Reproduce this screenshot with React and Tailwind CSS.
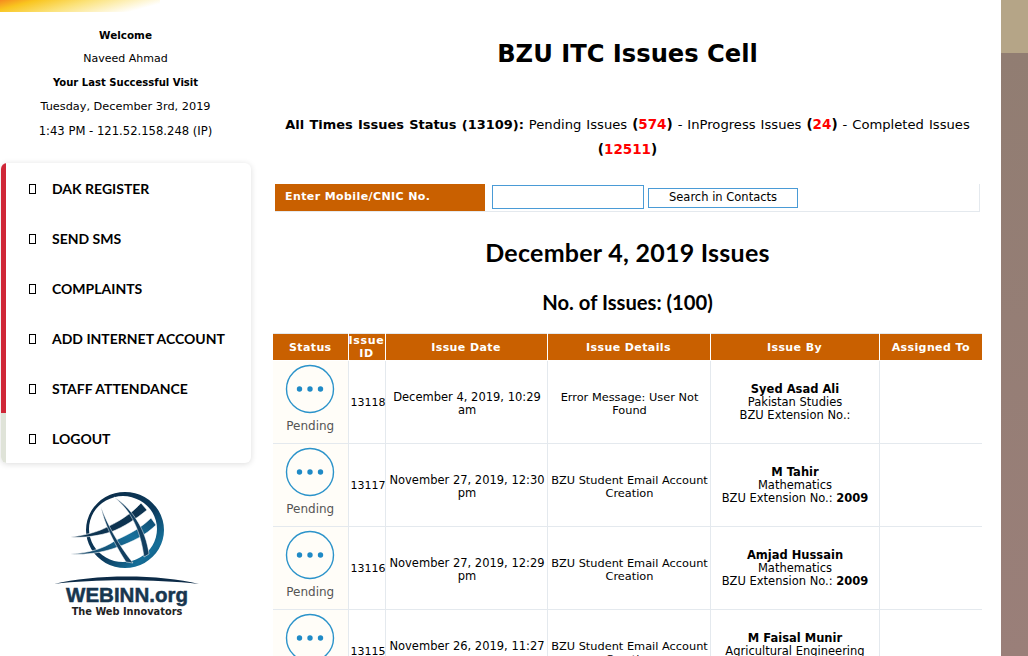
const rows = [
  { id: "13118", date: "December 4, 2019, 10:29 am", details: "Error Message: User Not Found", name: "Syed Asad Ali", dept: "Pakistan Studies", ext: "" },
  { id: "13117", date: "November 27, 2019, 12:30 pm", details: "BZU Student Email Account Creation", name: "M Tahir", dept: "Mathematics", ext: "2009" },
  { id: "13116", date: "November 27, 2019, 12:29 pm", details: "BZU Student Email Account Creation", name: "Amjad Hussain", dept: "Mathematics", ext: "2009" },
  { id: "13115", date: "November 26, 2019, 11:27 am", details: "BZU Student Email Account Creation", name: "M Faisal Munir", dept: "Agricultural Engineering", ext: "" },
];
const menu = ["DAK REGISTER", "SEND SMS", "COMPLAINTS", "ADD INTERNET ACCOUNT", "STAFF ATTENDANCE", "LOGOUT"];

function Logo() {
  return (
    <svg width="146" height="97" viewBox="0 0 146 97" className="block">
      <defs>
        <linearGradient id="ring" x1="0" y1="0" x2="1" y2="1">
          <stop offset="0" stopColor="#0b2a45" />
          <stop offset="0.55" stopColor="#0c3a5c" />
          <stop offset="0.8" stopColor="#156f99" />
          <stop offset="1" stopColor="#0f4a6e" />
        </linearGradient>
        <linearGradient id="sw2" x1="0" y1="1" x2="1" y2="0">
          <stop offset="0" stopColor="#16405f" />
          <stop offset="0.6" stopColor="#17719c" />
          <stop offset="1" stopColor="#0f4a6e" />
        </linearGradient>
      </defs>
      <path fillRule="evenodd" d="M71 2a39 38 0 1 0 .01 0Z M69 6a34 33 0 1 1-.01 0Z" fill="url(#ring)" />
      <path d="M16.7 47 C32 45 44 42 55 36 C68 30 80 21 87 13 L93 20 C82 29 70 37 57 42 C44 46 30 48 16.7 47Z" fill="#0d3350" stroke="#fff" strokeWidth="0.6" />
      <path d="M16.7 64 C32 63 48 60 62 50 C76 44 88 37 97 28 L102 35 C92 45 78 52 64 57 C48 63 32 65 16.7 64Z" fill="url(#sw2)" stroke="#fff" strokeWidth="0.6" />
      <path d="M47 17 C50 32 58 50 72 72 L79 73 C64 54 53 34 47 17Z" fill="#123f60" stroke="#fff" strokeWidth="0.5" />
      <path d="M60 7 C74 18 86 36 90 67 L95 64 C92 40 78 18 60 7Z" fill="#123f60" stroke="#fff" strokeWidth="0.5" />
      <path d="M0 94 C40 84 106 84 145 94 C100 89 40 89 0 94Z" fill="#0c2b47" />
    </svg>
  );
}

function Dots() {
  return (
    <svg width="50" height="50" viewBox="0 0 50 50" className="mx-auto block">
      <circle cx="25" cy="25" r="23.5" fill="none" stroke="#2b93ca" strokeWidth="1.4" />
      <circle cx="14.5" cy="25" r="2.7" fill="#1f8ac6" />
      <circle cx="25" cy="25" r="2.7" fill="#1f8ac6" />
      <circle cx="35.5" cy="25" r="2.7" fill="#1f8ac6" />
    </svg>
  );
}

export default function App() {
  return (
    <div className="flex h-[656px] w-[1028px] overflow-hidden bg-white text-[11.5px] text-black [font-family:'DejaVu_Sans',Verdana,sans-serif]">
      <aside className="w-[265px] shrink-0">
        <div className="h-[12px] w-[160px] bg-[linear-gradient(165deg,#f58a1f_0%,#f9c51f_18%,#fbe27a_45%,#ffffff_85%)]" />
        <div className="flex flex-col items-center pr-[14px] pt-[11px] text-[11px] leading-[24px]">
          <b className="text-[10.4px]">Welcome</b>
          <span>Naveed Ahmad</span>
          <b className="text-[10.05px]">Your Last Successful Visit</b>
          <span className="text-[11.3px]">Tuesday, December 3rd, 2019</span>
          <span className="text-[11.6px]">1:43 PM - 121.52.158.248 (IP)</span>
        </div>
        <nav className="ml-[1px] mt-[20px] w-[250px] overflow-hidden rounded-[6px] bg-white shadow-[0_1px_6px_rgba(0,0,0,0.14)]">
          {menu.map((m, i) => (
            <div key={m} className={`flex h-[50px] items-center border-l-[5px] pl-[23px] pt-[1px] ${i === 5 ? "border-[#dfe3d8]" : "border-[#cf2637]"}`}>
              <span className="inline-block h-[10px] w-[7px] border border-black" />
              <span className="ml-[16px] text-[14px] font-bold leading-none [font-family:'Lato',sans-serif]">{m}</span>
            </div>
          ))}
        </nav>
        <div className="mt-[27px] pl-[54px]">
          <Logo />
          <div className="mt-[-2px] w-[146px] text-center text-[20.5px] font-bold leading-[20px] text-[#17364f] [-webkit-text-stroke:0.5px_#17364f] [font-family:'Liberation_Sans',sans-serif]">WEBINN.org</div>
          <div className="mt-[1px] w-[146px] text-center text-[9.8px] font-bold leading-[12px] text-[#222]">The Web Innovators</div>
        </div>
      </aside>

      <main className="w-[717px] shrink-0 pl-[8px]">
        <h1 className="mt-[39px] text-center text-[24.2px] font-bold leading-[30px]">BZU ITC Issues Cell</h1>
        <p className="mt-[43px] text-center text-[13.15px] leading-[24px] [word-spacing:0.8px]">
          <b className="text-[12.95px]">All Times Issues Status (13109):</b> Pending Issues <b className="text-[13.5px]">(<span className="text-[#f00]">574</span>)</b> - InProgress Issues <b className="text-[13.5px]">(<span className="text-[#f00]">24</span>)</b> - Completed Issues <b className="text-[13.5px]">(<span className="text-[#f00]">12511</span>)</b>
        </p>
        <div className="ml-[2px] mt-[22px] flex h-[28px] w-[705px] items-start border-b border-r border-[#e4e9ee]">
          <div className="flex h-[27px] w-[210px] items-center bg-[#c96000] pl-[10px] text-[11px] font-bold tracking-[0.4px] text-white">Enter Mobile/CNIC No.</div>
          <input className="ml-[7px] mt-[1px] h-[24px] w-[152px] border border-[#4a9bd6] bg-white outline-none" />
          <button className="ml-[4px] mt-[4px] h-[20px] w-[150px] border border-[#4a9bd6] bg-white">Search in Contacts</button>
        </div>
        <h2 className="mt-[25px] text-center text-[25px] font-bold leading-[30px] tracking-[0.25px] [font-family:'Lato',sans-serif]">December 4, 2019 Issues</h2>
        <h3 className="mt-[23px] text-center text-[20.2px] font-bold leading-[24px] [font-family:'Lato',sans-serif]">No. of Issues: (100)</h3>
        <table className="mt-[19px] w-[709px] table-fixed border-collapse text-center">
          <colgroup>
            <col className="w-[75px]" /><col className="w-[37px]" /><col className="w-[162px]" /><col className="w-[163px]" /><col className="w-[169px]" /><col className="w-[103px]" />
          </colgroup>
          <thead>
            <tr className="h-[27px] bg-[#c96000] text-[11px] font-bold leading-[13px] tracking-[0.4px] text-white">
              <th className="border border-white border-t-[#e4e9ee] border-l-0">Status</th>
              <th className="border border-white border-t-[#e4e9ee] tracking-[0.7px]">Issue ID</th>
              <th className="border border-white border-t-[#e4e9ee]">Issue Date</th>
              <th className="border border-white border-t-[#e4e9ee]">Issue Details</th>
              <th className="border border-white border-t-[#e4e9ee]">Issue By</th>
              <th className="border border-white border-t-[#e4e9ee] border-r-0">Assigned To</th>
            </tr>
          </thead>
          <tbody className="leading-[13px]">
            {rows.map((r) => (
              <tr key={r.id} className="h-[83px] border-b border-[#e4e9ee]">
                <td className="border-r border-[#e4e9ee] bg-[#fffdf8] pt-[3px] align-top text-[12px] text-[#555]">
                  <Dots />
                  <div className="mt-[6px]">Pending</div>
                </td>
                <td className="border-r border-[#e4e9ee] pl-[2px] text-left text-[11px]">{r.id}</td>
                <td className="border-r border-[#e4e9ee] pl-[3px] pr-[1px] pt-[3px]">{r.date}</td>
                <td className="border-r border-[#e4e9ee] pl-[2px] pr-0 pt-[3px] text-[11.35px]">{r.details}</td>
                <td className="border-r border-[#e4e9ee] pl-[1px]">
                  <b>{r.name}</b><br />{r.dept}<br />BZU Extension No.: {r.ext && <b>{r.ext}</b>}
                </td>
                <td></td>
              </tr>
            ))}
          </tbody>
        </table>
      </main>

      <div className="flex-1" />
      <div className="flex w-[27px] flex-col">
        <div className="h-[53px] bg-[#b5a587]" />
        <div className="flex-1 bg-[linear-gradient(180deg,#917d72_0%,#9a7f79_100%)]" />
      </div>
    </div>
  );
}
